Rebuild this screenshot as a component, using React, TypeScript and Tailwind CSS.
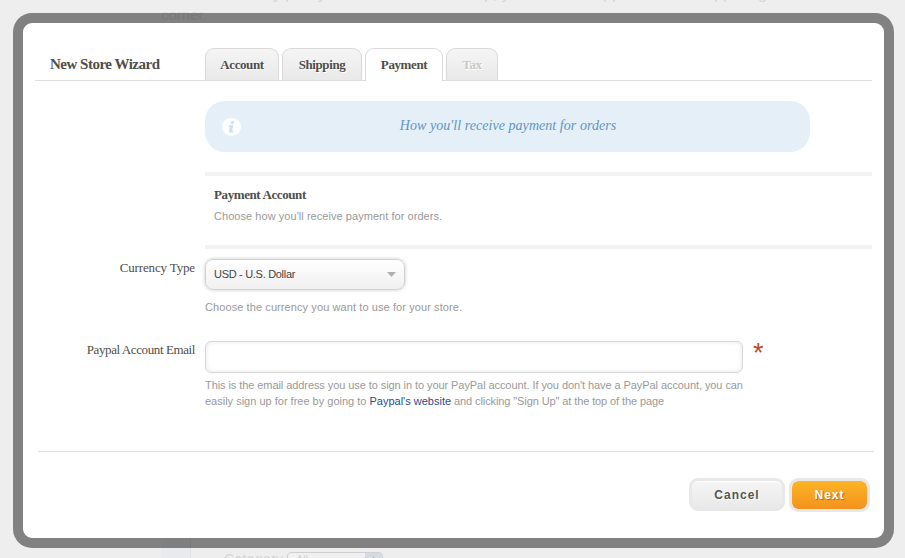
import React from "react";

const serif = "font-['Liberation_Serif',serif]";
const sans = "font-['Liberation_Sans',sans-serif]";

function Tab({ label, box, state }: { label: string; box: string; state?: "active" | "disabled" }) {
  const look =
    state === "active"
      ? "h-[33px] bg-white text-[#4f4e4a]"
      : "h-8 bg-linear-to-b from-[#f5f5f5] to-[#e9e9e9] [text-shadow:1px_1px_0_#fff] " +
        (state === "disabled" ? "text-[#c9c9c9]" : "text-[#4f4e4a]");
  return (
    <button className={`${box} ${look} flex justify-center whitespace-nowrap rounded-t-[9px] border border-b-0 border-[#d9d9d9] pt-2 text-[13px] leading-4 font-bold`}>
      {label}
    </button>
  );
}

function Backdrop() {
  return (
    <div className={`absolute inset-0 overflow-hidden bg-[#eee] text-[#d6d6d6] ${sans}`}>
      <span className="absolute -top-[14px] left-[273px] text-[16px] leading-4">y p</span>
      <span className="absolute -top-[14px] left-[318px] text-[16px] leading-4">y</span>
      <span className="absolute -top-[14px] left-[484px] text-[16px] leading-4">p, y</span>
      <span className="absolute -top-[14px] left-[603px] text-[16px] leading-4">pp</span>
      <span className="absolute -top-[14px] left-[714px] text-[16px] leading-4">pp</span>
      <span className="absolute -top-[14px] left-[758px] text-[16px] leading-4">g</span>
      <span className="absolute top-[7px] left-[161px] text-[15px] leading-4 text-[#dedede]">corner.</span>
      <div className="absolute top-[538px] left-[161px] h-5 w-[30px] border-r border-[#e2e2e2] bg-[#e8eaed]" />
      <span className="absolute top-[551px] left-[224px] text-[14px] leading-4 tracking-[.3px]">Category</span>
      <div className="absolute top-[552px] left-[287px] flex h-4 w-[96px] overflow-hidden rounded-[4px] border border-[#cfd0d4] bg-[#f0f0f0] pl-2 text-[11px] leading-3">
        <span className="flex-1">All</span>
        <span className="w-[17px] bg-[#d3dbe5] text-center text-[8px] text-[#a5adb8]">▲</span>
      </div>
    </div>
  );
}

export default function App() {
  return (
    <div className="relative h-[558px] w-[905px] overflow-hidden">
      <Backdrop />
      <div className="relative ml-[13px] pt-[13px]">
        <main className={`h-[535px] w-[881px] rounded-[19px] border-10 border-black/46 bg-white bg-clip-padding ${sans}`}>
          <header className={`ml-3 mt-[25px] flex h-[33px] w-[837px] border-b border-[#dedede] ${serif}`}>
            <h1 className="w-[170px] pl-[15px] pt-2 text-[15px] leading-4 font-bold tracking-[-.5px] text-[#4f4e4a]">New Store Wizard</h1>
            <nav className="flex gap-[3px] tracking-[-.4px]">
              <Tab label="Account" box="w-[74px]" />
              <Tab label="Shipping" box="w-[80px]" />
              <Tab label="Payment" box="w-[78px]" state="active" />
              <Tab label="Tax" box="w-[52px]" state="disabled" />
            </nav>
          </header>

          <section className="ml-[182px] mt-5 flex h-[51px] w-[605px] items-center rounded-[20px] bg-[#e4eff8]">
            <span className="ml-[17px] flex h-[18px] w-[19px] items-center justify-center rounded-full bg-white text-[#c9e1f5]">
              <svg width="7" height="12" viewBox="0 0 7 12" fill="currentColor">
                <circle cx="4.4" cy="1.6" r="1.6" />
                <path d="M1 4.2h4.2L4.2 9.7h1.3L5 11.5H.8L1.9 6H.6z" />
              </svg>
            </span>
            <p className={`-mt-[3px] flex-1 pr-[35px] text-center text-[14px] tracking-[.05px] italic text-[#5f95bf] ${serif}`}>How you'll receive payment for orders</p>
          </section>

          <section className="ml-[182px] mt-5 h-[77px] w-[667px] border-y-4 border-[#f2f2f2] pl-[9px] pt-[11px]">
            <h2 className={`text-[13px] leading-4 font-bold tracking-[-.4px] text-[#4f4e4a] ${serif}`}>Payment Account</h2>
            <p className="mt-[5px] text-[11px] leading-4 tracking-[.05px] text-[#999]">Choose how you'll receive payment for orders.</p>
          </section>

          <div className="mt-[10px] flex h-[82px]">
            <label className={`w-[172px] pt-[1px] text-right text-[13px] leading-4 tracking-[-.15px] text-[#4f4e4a] ${serif}`}>Currency Type</label>
            <div className="ml-[10px]">
              <button className="flex h-[31px] w-[200px] items-center justify-between rounded-[8px] border border-[#d2d2d2] bg-linear-to-b from-white to-[#f0f0f0] pl-2 pr-2 text-[11px] tracking-[-.3px] text-[#444] shadow-[0_0_3px_1px_#dedede]">
                USD - U.S. Dollar
                <svg width="9" height="5" viewBox="0 0 9 5"><path d="M0 0h9L4.5 5z" fill="#b0b0b0" /></svg>
              </button>
              <p className="mt-[9px] text-[11px] leading-4 tracking-[.09px] text-[#999]">Choose the currency you want to use for your store.</p>
            </div>
          </div>

          <div className="flex h-[110px]">
            <label className={`w-[172px] pt-[1px] text-right text-[13px] leading-4 tracking-[-.4px] text-[#4f4e4a] ${serif}`}>Paypal Account Email</label>
            <div className="ml-[10px] w-[538px]">
              <input className="block h-8 w-[538px] rounded-[6px] border border-[#d7d7d7] bg-white shadow-[inset_0_0_5px_#e8e8e8]" />
              <p className="mt-1 whitespace-nowrap text-[11px] leading-4 tracking-[-.075px] text-[#999]">
                This is the email address you use to sign in to your PayPal account. If you don't have a PayPal account, you can<br />
                <span className="tracking-normal">easily sign up for free by going to <a className="text-[#2a4b8d]">Paypal's website</a></span><span className="tracking-[-.1px]"> and clicking "Sign Up" at the top of the page</span>
              </p>
            </div>
            <span className="-mt-[2px] ml-[10px] text-[27px] leading-7 text-[#bd4d1c]">*</span>
          </div>

          <footer className="ml-[15px] flex w-[836px] justify-end gap-1 border-t border-[#e0e0e0] pr-[4px] pt-[26px] text-[12px] font-bold tracking-[1px]">
            <button className="h-[33px] w-[96px] rounded-[9px] border-3 border-[#e8e8e8] bg-linear-to-b from-[#f5f5f5] to-[#e9e9e9] text-[#555] [text-shadow:1px_1px_0_#fff] shadow-[inset_0_1px_0_#fff]">Cancel</button>
            <button className="h-[34px] w-[81px] rounded-[9px] border-3 border-[#e8e8e8] bg-linear-to-b from-[#fcb424] to-[#f3921e] bg-clip-padding text-white [text-shadow:1px_1px_1px_#9b6a20]">Next</button>
          </footer>
        </main>
      </div>
    </div>
  );
}
